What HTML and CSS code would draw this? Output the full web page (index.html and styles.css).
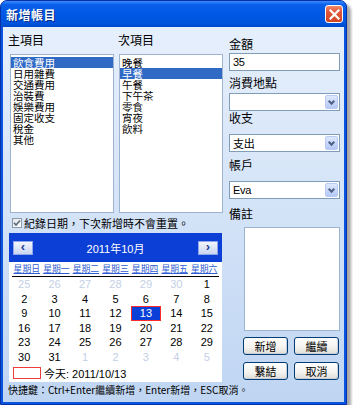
FILE: index.html
```html
<!DOCTYPE html>
<html lang="zh-Hant">
<head>
    <meta charset="UTF-8">
    <title>新增帳目</title>
    <link rel="stylesheet" href="styles.css">
</head>
<body>

<div class="window">
    <div class="titlebar">
        <span class="title">新增帳目</span>
        <span class="close">
            <svg width="11" height="11" viewBox="0 0 11 11"><path d="M1.5 1.5 L9.5 9.5 M9.5 1.5 L1.5 9.5" stroke="#fff" stroke-width="2.2" stroke-linecap="square"/></svg>
        </span>
    </div>

    <div class="client">
        <div class="left">
            <div class="lists">
                <div class="pane">
                    <div class="label">主項目</div>
                    <ul class="listbox">
                        <li class="sel">飲食費用</li>
                        <li>日用雜費</li>
                        <li>交通費用</li>
                        <li>治裝費</li>
                        <li>娛樂費用</li>
                        <li>固定收支</li>
                        <li>稅金</li>
                        <li>其他</li>
                    </ul>
                </div>
                <div class="pane pane-sub">
                    <div class="label">次項目</div>
                    <ul class="listbox">
                        <li>晚餐</li>
                        <li class="sel">早餐</li>
                        <li>午餐</li>
                        <li>下午茶</li>
                        <li>零食</li>
                        <li>宵夜</li>
                        <li>飲料</li>
                    </ul>
                </div>
            </div>

            <div class="check">
                <span class="box">
                    <svg width="8" height="8" viewBox="0 0 8 8"><path d="M1 3.8 L3 6 L7 1.5" fill="none" stroke="#5a6a7c" stroke-width="1.6"/></svg>
                </span>
                紀錄日期，下次新增時不會重置。
            </div>

            <div class="calendar">
                <div class="cal-head">
                    <span class="nav">&lsaquo;</span>
                    <span class="month">2011年10月</span>
                    <span class="nav">&rsaquo;</span>
                </div>
                <div class="cal-dow">
                    <span>星期日</span><span>星期一</span><span>星期二</span><span>星期三</span><span>星期四</span><span>星期五</span><span>星期六</span>
                </div>
                <div class="cal-days">
                    <span class="other">25</span><span class="other">26</span><span class="other">27</span><span class="other">28</span><span class="other">29</span><span class="other">30</span><span>1</span>
                    <span>2</span><span>3</span><span>4</span><span>5</span><span>6</span><span>7</span><span>8</span>
                    <span>9</span><span>10</span><span>11</span><span>12</span><span class="picked">13</span><span>14</span><span>15</span>
                    <span>16</span><span>17</span><span>18</span><span>19</span><span>20</span><span>21</span><span>22</span>
                    <span>23</span><span>24</span><span>25</span><span>26</span><span>27</span><span>28</span><span>29</span>
                    <span>30</span><span>31</span><span class="other">1</span><span class="other">2</span><span class="other">3</span><span class="other">4</span><span class="other">5</span>
                </div>
                <div class="cal-today">
                    <span class="today-box"></span>
                    <span>今天: 2011/10/13</span>
                </div>
            </div>
        </div>

        <div class="right">
            <div class="label f-amount">金額</div>
            <div class="field">35</div>

            <div class="label f-place">消費地點</div>
            <div class="field combo"><span></span><span class="drop"></span></div>

            <div class="label f-type">收支</div>
            <div class="field combo combo-type"><span>支出</span><span class="drop"></span></div>

            <div class="label f-account">帳戶</div>
            <div class="field combo combo-account"><span class="latin">Eva</span><span class="drop"></span></div>

            <div class="label f-note">備註</div>
            <div class="memo"></div>

            <div class="buttons">
                <span class="btn">新增</span>
                <span class="btn">繼續</span>
                <span class="btn">繫結</span>
                <span class="btn">取消</span>
            </div>
        </div>

        <div class="shortcut">快捷鍵：Ctrl+Enter繼續新增，Enter新增，ESC取消。</div>
    </div>
</div>

</body>
</html>
```

FILE: styles.css
```css
/* Estilos gerais */
body {
    margin: 0;
    padding: 0;
    background: #ffffff;
    font-family: "Noto Sans CJK TC", "Noto Sans CJK SC", sans-serif;
    font-size: 11px;
    color: #000000;
}

.window {
    width: 347px;
    height: 405px;
    box-sizing: border-box;
    background: #0a55e0;
    border: 1px solid #0831a8;
    border-radius: 7px 7px 0 0;
    box-shadow: 4px 4px 3px rgba(0, 0, 0, 0.35);
    display: flex;
    flex-direction: column;
}

/* Barra de título */
.titlebar {
    height: 26px;
    display: flex;
    align-items: center;
    justify-content: space-between;
    padding: 0 3px 0 5px;
    background: linear-gradient(to bottom, #3b8dff 0%, #0b60ea 14%, #0058e4 50%, #0054dc 88%, #0048c8 100%);
    border-radius: 6px 6px 0 0;
}

.title {
    color: #ffffff;
    font-weight: bold;
    font-size: 12px;
    letter-spacing: 0.5px;
    text-shadow: 1px 1px 0 #0a2a80;
}

.close {
    width: 18px;
    height: 18px;
    box-sizing: border-box;
    border: 1px solid #ffffff;
    border-radius: 3px;
    background: linear-gradient(to bottom, #f08a6a 0%, #e2583a 35%, #d24322 100%);
    display: flex;
    align-items: center;
    justify-content: center;
}

/* Área do cliente */
.client {
    flex: 1;
    margin: 0 2px 2px 2px;
    padding: 6px 4px 0 5px;
    background: linear-gradient(to bottom, #e6effc 0%, #d5e4f8 45%, #bfd5f2 100%);
    display: grid;
    grid-template-columns: 215px 111px;
    column-gap: 6px;
    align-content: start;
}

.label {
    height: 14px;
    line-height: 14px;
    font-size: 12px;
}

/* Listas */
.lists {
    display: flex;
}

.pane {
    width: 110px;
}

.pane .label {
    margin-bottom: 7px;
}

.pane-sub {
    width: 105px;
}

.listbox {
    list-style: none;
    margin: 0 0 0 2px;
    padding: 2px 0 0 0;
    width: 104px;
    height: 159px;
    box-sizing: border-box;
    background: #ffffff;
    border: 1px solid #9db3cf;
}

.pane-sub .listbox {
    margin-left: 1px;
}

.listbox li {
    height: 11px;
    line-height: 11px;
    font-size: 10.5px;
    padding-left: 2px;
    white-space: nowrap;
}

.listbox li.sel {
    background: #316ac5;
    color: #ffffff;
}

/* Caixa de seleção */
.check {
    margin-top: 4px;
    height: 12px;
    display: flex;
    align-items: center;
    gap: 2px;
    font-size: 11px;
    line-height: 12px;
}

.box {
    margin-left: 4px;
    width: 10px;
    height: 10px;
    box-sizing: border-box;
    border: 1px solid #8d9bab;
    background: linear-gradient(135deg, #e2e6ea, #ffffff);
    display: flex;
    align-items: center;
    justify-content: center;
}

/* Calendário */
.calendar {
    margin: 4px 0 0 1px;
    width: 213px;
    height: 149px;
    background: #ffffff;
    font-family: "Liberation Sans", "Noto Sans CJK TC", sans-serif;
}

.cal-head {
    height: 29px;
    background: #0b3fd6;
    display: flex;
    align-items: center;
    justify-content: space-between;
    padding: 0 4px;
}

.nav {
    width: 20px;
    height: 14px;
    box-sizing: border-box;
    border: 1px solid #8ea6e8;
    background: linear-gradient(to bottom, #f4f6fc, #c9d4f0);
    color: #1f3f9a;
    font-weight: bold;
    font-size: 13px;
    line-height: 10px;
    text-align: center;
}

.month {
    color: #ffffff;
    font-size: 11px;
}

.cal-dow {
    height: 14px;
    display: grid;
    grid-template-columns: repeat(7, 1fr);
    border-bottom: 1px solid #000000;
    margin: 0 3px;
}

.cal-dow span {
    font-family: "Noto Sans CJK TC", sans-serif;
    font-size: 8.8px;
    line-height: 13px;
    color: #2f5cd0;
    text-decoration: underline;
    white-space: nowrap;
    text-align: center;
}

.cal-days {
    display: grid;
    grid-template-columns: repeat(7, 1fr);
    grid-auto-rows: 14.6px;
}

.cal-days span {
    font-size: 11px;
    line-height: 14.6px;
    text-align: center;
}

.cal-days .other {
    color: #c3cfe6;
}

.cal-days .picked {
    background: #0a3fd8;
    color: #ffffff;
    box-sizing: border-box;
    border: 1px solid #ff2a2a;
    line-height: 12.6px;
}

.cal-today {
    height: 15px;
    margin-top: 1.4px;
    display: flex;
    align-items: center;
    padding-left: 4px;
    gap: 3px;
    font-size: 11px;
}

.today-box {
    width: 28px;
    height: 12px;
    box-sizing: border-box;
    border: 1px solid #ee3b3b;
}

/* Campos à direita */
.right {
    display: flex;
    flex-direction: column;
}

.f-amount { margin-top: 4px; }
.f-place { margin-top: 5px; }
.f-type { margin-top: 0; }
.f-account { margin-top: 6px; }
.f-note { margin-top: 8px; }

.field {
    margin-top: 2px;
    height: 18px;
    box-sizing: border-box;
    background: #ffffff;
    border: 1px solid #7f9db9;
    font-family: "Liberation Sans", sans-serif;
    font-size: 11px;
    line-height: 16px;
    padding-left: 3px;
    letter-spacing: -0.3px;
}

.combo {
    margin-top: 3px;
    display: flex;
    justify-content: space-between;
    padding: 1px 1px 1px 3px;
    line-height: 14px;
}

.combo-type,
.combo-account {
    margin-top: 9px;
}

.combo span {
    font-family: "Noto Sans CJK TC", sans-serif;
}

.combo .latin {
    font-family: "Liberation Sans", sans-serif;
}

.drop {
    width: 13px;
    height: 14px;
    box-sizing: border-box;
    border: 1px solid #b9cbf3;
    border-radius: 2px;
    background: linear-gradient(to bottom, #dfe8fd, #b4c8f7);
    position: relative;
}

.drop::after {
    content: "";
    position: absolute;
    left: 3px;
    top: 3px;
    width: 3px;
    height: 3px;
    border-right: 2px solid #4d6185;
    border-bottom: 2px solid #4d6185;
    transform: rotate(45deg);
}

.memo {
    margin: 6px 0 0 15px;
    height: 104px;
    background: #ffffff;
    border: 1px solid #9db3cf;
    box-sizing: border-box;
}

/* Botões */
.buttons {
    margin: 6px 1px 0 14px;
    display: grid;
    grid-template-columns: 1fr 1fr;
    gap: 7px 6px;
}

.btn {
    height: 18px;
    box-sizing: border-box;
    border: 1px solid #003c74;
    border-radius: 3px;
    background: linear-gradient(to bottom, #ffffff 0%, #f3f2ee 60%, #dedcd4 100%);
    box-shadow: inset -1px -1px 0 #c8cfdc;
    text-align: center;
    font-size: 11px;
    line-height: 16px;
}

/* Atalhos */
.shortcut {
    grid-column: 1 / 3;
    margin-top: 2px;
    font-size: 10px;
    line-height: 12px;
    white-space: nowrap;
}
```
